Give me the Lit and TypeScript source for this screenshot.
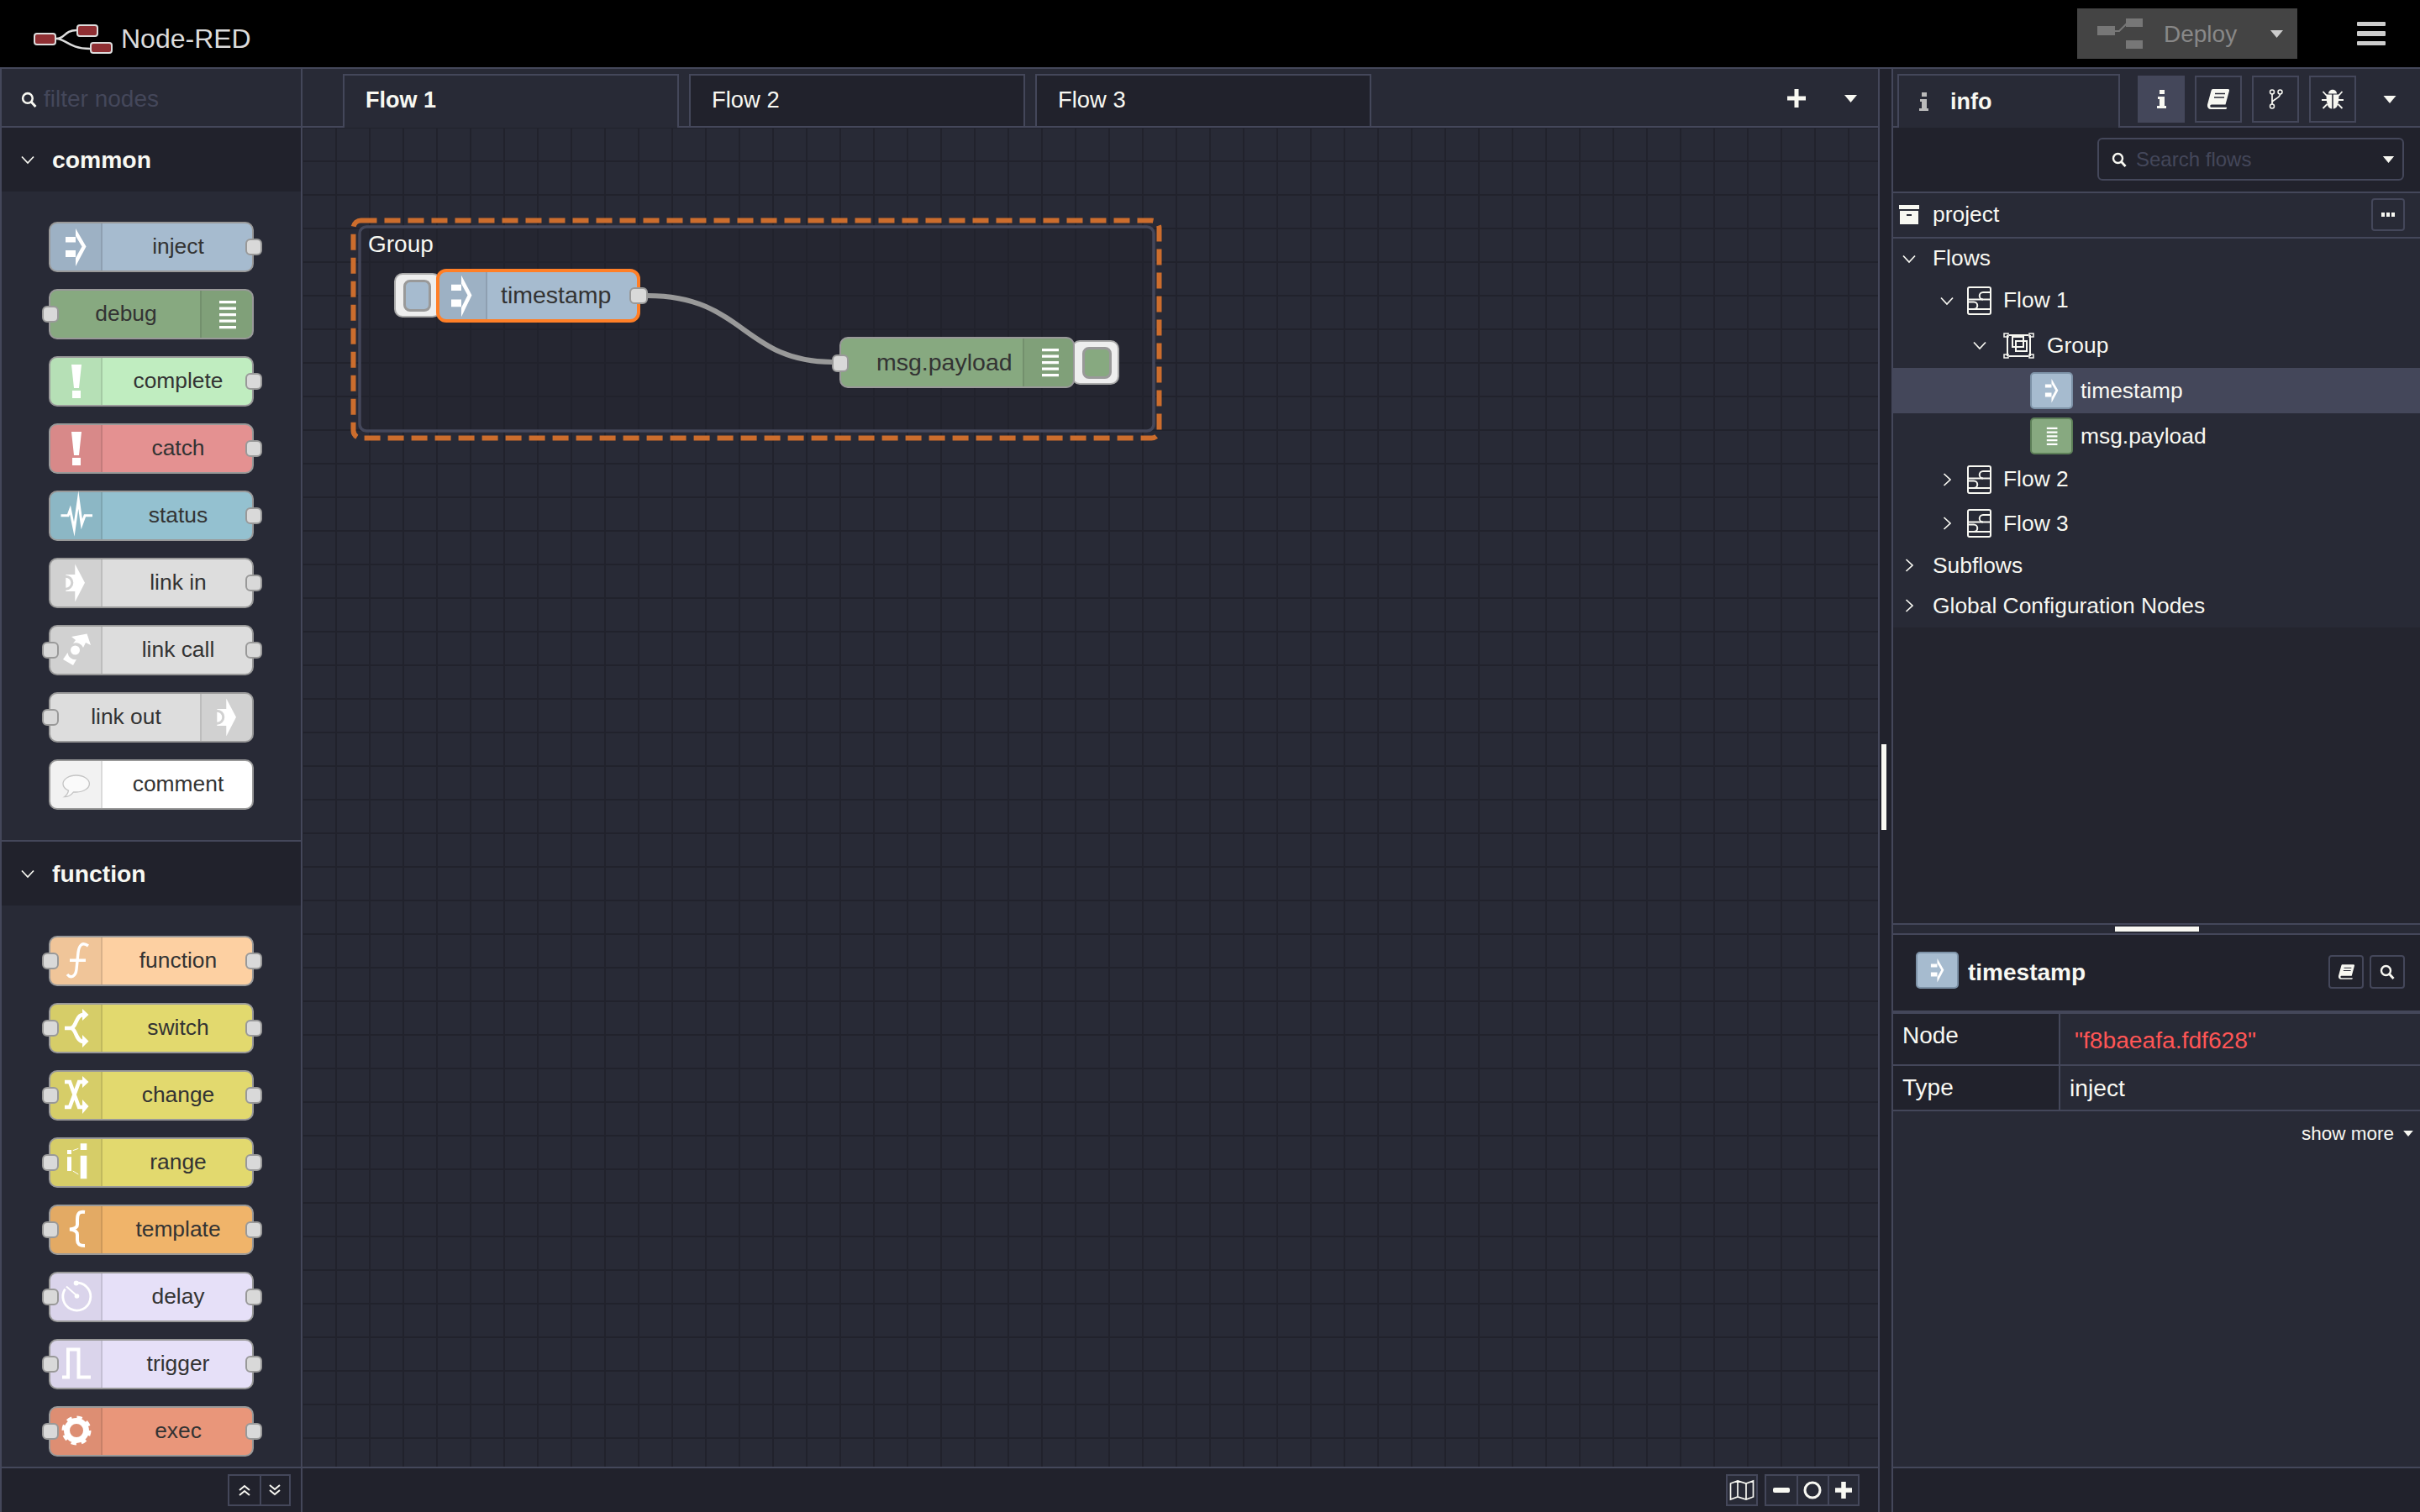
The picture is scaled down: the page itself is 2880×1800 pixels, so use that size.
import { LitElement, html, css, svg, nothing } from "lit";
import { customElement } from "lit/decorators.js";

// node icons are drawn in the coordinates of the 64x60 icon cell
const linkShape = svg`<path fill-rule="evenodd" d="M20.3 20H31.3V7.5L43 29.7 31.3 52.5V40H20.3V38.7A9 9 0 0 0 20.3 20.7ZM20.3 23.7A6 6 0 0 1 20.3 35.7Z" fill="#fff" />`;

const bang = svg`<path d="M27 10h12l-3 28h-6zM28 41h10v9H28z" fill="#fff" />`;

const ICONS = {
	inject: svg`<path d="M20 18h12v6.5H20zM20 34h12v8H20zM32 8 44.5 29.5 32 53V43l7.5-13.5L32 17z" fill="#fff" />`,
	debug: svg`<path d="M23 14h20v3.2H23zM23 21.5h20v3.2H23zM23 29h20v3.2H23zM23 36.5h20v3.2H23zM23 44h20v3.2H23z" fill="#fff" />`,
	complete: bang,
	catch: bang,
	status: svg`<polyline points="14.5,29.7 23,29.7 25.5,23 30.3,46 35.3,11 39.3,40 43,29.7 52,29.7" fill="none" stroke="#fff" stroke-width="3" stroke-miterlimit="12" />`,
	link: linkShape,
	linkcall: svg`<path d="M27 14 45.5 10.5 50 24 44 21 41 27A9 9 0 0 0 29 22L32 18ZM17 41 29 48 33 41A9 9 0 0 1 22.5 33Z" fill="#fff" /><circle cx="31.5" cy="30" r="5.5" fill="#fff" />`,
	comment: svg`<path d="M32.7 19C24 19 17 23.5 17 29c0 3.5 2.5 6.3 6.5 8.2C23 40 21 43 18.500 44.7c4 0 8.500-2.500 11-5.800 1 .1 2.100.1 3.200.1 8.700 0 15.700-4.500 15.700-10S41.400 19 32.700 19Z" fill="#fafafa" stroke="#c4c4c4" stroke-width="1.3" />`,
	func: svg`<path d="M47 12C40 7 36 11 35 20L33 40C32 49 26 51 22 46M25 29.3H44" fill="none" stroke="#fff" stroke-width="3.4" />`,
	switch: svg`<path d="M19 30H26C33 30 32 14 41 14M26 30C33 30 32 46 41 46" fill="none" stroke="#fff" stroke-width="4.5" /><path d="M40 7 47.5 14 40 21ZM40 38 47.5 45.5 40 53Z" fill="#fff" />`,
	change: svg`<path d="M19 14H25L36 44H41M19 44H25L36 14H41" fill="none" stroke="#fff" stroke-width="4.5" /><path d="M40 7 47.5 14 40 21ZM40 35 47.5 43 40 52Z" fill="#fff" />`,
	range: svg`<path d="M22 15h5v5h-5zM22 23.3h5V40h-5zM37.7 7.3h7.6V15h-7.6zM37.7 21.7h7.6v27.6h-7.6z" fill="#fff" /><path d="M28.7 15.7 35.3 13.3M28.7 40 35.3 44" stroke="#fff" stroke-width="1" />`,
	template: svg`<path d="M43 9C35 8 34 12 34 18V24C34 27 30 29 25 29.5 30 30 34 32 34 36V42C34 47 36 49 43 49" fill="none" stroke="#fff" stroke-width="4" />`,
	delay: svg`<path d="M35 13.1A16.5 16.5 0 1 1 19.5 20.5" fill="none" stroke="#fff" stroke-width="2.8" /><circle cx="32.7" cy="13.5" r="3" fill="#fff" /><circle cx="33.5" cy="29" r="2.8" fill="#fff" /><path d="M21 17.5 34 29" stroke="#fff" stroke-width="2" />`,
	trigger: svg`<path d="M16 45.5H23V12.5H35.5V45.5H50" fill="none" stroke="#fff" stroke-width="4" />`,
	exec: svg`<circle cx="33" cy="29" r="11.5" fill="none" stroke="#fff" stroke-width="7" /><circle cx="33" cy="29" r="15" fill="none" stroke="#fff" stroke-width="5" stroke-dasharray="6 5.78" />`,
};

type IconName = keyof typeof ICONS;

interface PaletteNode {
	label: string;
	color: string;
	icon: IconName;
	input?: boolean;
	output?: boolean;
	right?: boolean;
}

const COMMON: PaletteNode[] = [
	{ label: "inject", color: "#a6bbcf", icon: "inject", output: true },
	{ label: "debug", color: "#87a980", icon: "debug", input: true, right: true },
	{ label: "complete", color: "#c0edc0", icon: "complete", output: true },
	{ label: "catch", color: "#e49191", icon: "catch", output: true },
	{ label: "status", color: "#94c1d0", icon: "status", output: true },
	{ label: "link in", color: "#dddddd", icon: "link", output: true },
	{ label: "link call", color: "#dddddd", icon: "linkcall", input: true, output: true },
	{ label: "link out", color: "#dddddd", icon: "link", input: true, right: true },
	{ label: "comment", color: "#ffffff", icon: "comment" },
];

const FUNCTION: PaletteNode[] = [
	{ label: "function", color: "#fdd0a2", icon: "func", input: true, output: true },
	{ label: "switch", color: "#e2d96e", icon: "switch", input: true, output: true },
	{ label: "change", color: "#e2d96e", icon: "change", input: true, output: true },
	{ label: "range", color: "#e2d96e", icon: "range", input: true, output: true },
	{ label: "template", color: "#f0b46a", icon: "template", input: true, output: true },
	{ label: "delay", color: "#e6e0f8", icon: "delay", input: true, output: true },
	{ label: "trigger", color: "#e6e0f8", icon: "trigger", input: true, output: true },
	{ label: "exec", color: "#e9967a", icon: "exec", input: true, output: true },
];

const cellIcon = (name: IconName) =>
	html`<svg class="cell-icon" viewBox="0 0 64 60" preserveAspectRatio="none">${ICONS[name]}</svg>`;

const caret = (w: number, h: number) =>
	html`<svg class="caret" width=${w} height=${h} viewBox="0 0 10 6"><path d="M0 0H10L5 6Z" /></svg>`;

const searchIcon = (size: number) =>
	html`<svg class="line-icon" width=${size} height=${size} viewBox="0 0 18 18">
		<circle cx="7.5" cy="7.5" r="5.5" stroke-width="2.4" />
		<path d="M11.5 11.5 16.5 17" stroke-width="2.8" />
	</svg>`;

const chevron = (open: boolean) =>
	html`<svg class="chev ${open ? "" : "shut"}" width="16" height="16" viewBox="0 0 16 16">
		<path d="M1 4.5 8 12 15 4.5" />
	</svg>`;

const bookIcon = (w: number, h: number) =>
	html`<svg width=${w} height=${h} viewBox="0 0 26 24">
		<path d="M6.5 0H24.5C25.8 0 26.3 1 26 2L21.5 18.5H5C2.7 18.5 2.7 21.8 5 21.8H22.5C23 21.8 23.3 22.3 23 23 22.7 23.6 22.2 24 21.5 24H4C.5 24-.8 20.5.3 17.5L4.5 2C4.9.7 5.5 0 6.5 0Z" fill="#f8f8f2" />
		<path d="M9 5.5H21M8 10H20" stroke="#282a36" stroke-width="1.5" />
	</svg>`;

const flowIcon = html`<svg class="line-icon" width="29" height="34" viewBox="0 0 29 34">
	<rect x="1" y="1" width="27" height="32" rx="2" stroke-width="2" />
	<path d="M1 15.5H28M1 27H28" stroke-width="2" />
	<path d="M28 7H19A4 4 0 0 0 19 15.5M1 18.5H8A4 4 0 0 1 8 27" stroke-width="2" />
</svg>`;

const groupIcon = html`<svg class="line-icon" width="37" height="31" viewBox="0 0 37 31">
	<path d="M5 3V28M32 3V28M7 3H30M7 28H30" stroke-width="2" />
	<rect x="1" y="1" width="5" height="4" stroke-width="1.5" />
	<rect x="31" y="1" width="5" height="4" stroke-width="1.5" />
	<rect x="1" y="26" width="5" height="4" stroke-width="1.5" />
	<rect x="31" y="26" width="5" height="4" stroke-width="1.5" />
	<rect x="11" y="5" width="13" height="12" stroke-width="2" />
	<rect x="15" y="10" width="13" height="12" stroke-width="2" />
</svg>`;

const miniNode = (name: IconName, color: string, edge: string) =>
	html`<span class="mini" style="background:${color};border-color:${edge}">
		<svg width="41" height="38" viewBox="0 0 64 60">${ICONS[name]}</svg>
	</span>`;

interface TreeRow {
	label: string;
	height: number;
	indent: number;
	open?: boolean;
	icon?: unknown;
	iconGap?: number;
	labelGap: number;
	selected?: boolean;
}

const TREE: TreeRow[] = [
	{ label: "Flows", height: 47, indent: 11, open: true, labelGap: 20 },
	{ label: "Flow 1", height: 53, indent: 56, open: true, icon: flowIcon, iconGap: 16, labelGap: 14 },
	{ label: "Group", height: 54, indent: 95, open: true, icon: groupIcon, iconGap: 20, labelGap: 15 },
	{ label: "timestamp", height: 54, indent: 163, icon: miniNode("inject", "#a6bbcf", "#7d92a7"), labelGap: 9, selected: true },
	{ label: "msg.payload", height: 54, indent: 163, icon: miniNode("debug", "#87a980", "#5d7f58"), labelGap: 9 },
	{ label: "Flow 2", height: 49, indent: 56, open: false, icon: flowIcon, iconGap: 16, labelGap: 14 },
	{ label: "Flow 3", height: 56, indent: 56, open: false, icon: flowIcon, iconGap: 16, labelGap: 14 },
	{ label: "Subflows", height: 44, indent: 11, open: false, labelGap: 20 },
	{ label: "Global Configuration Nodes", height: 52, indent: 11, open: false, labelGap: 20 },
];

// the canvas starts here in page coordinates; diagram items below use page coordinates
const ORIGIN_X = 360;
const ORIGIN_Y = 152;

const place = (x: number, y: number, w: number, h: number) =>
	`left:${x - ORIGIN_X}px;top:${y - ORIGIN_Y}px;width:${w}px;height:${h}px`;

@customElement("app-root")
export class AppRoot extends LitElement {
	static styles = css`
		:host {
			display: block;
			width: 2880px;
			height: 1800px;
			overflow: hidden;
			background: #000;
			color: #f8f8f2;
			font-family: "Liberation Sans", Arial, sans-serif;
			font-size: 26.4px;
			--bg: #282a36;
			--bg2: #21222c;
			--line: #44475a;
		}

		* {
			box-sizing: border-box;
		}

		.caret path {
			fill: #f8f8f2;
		}

		.line-icon {
			flex-shrink: 0;
			fill: none;
			stroke: #f8f8f2;
		}

		.chev {
			flex-shrink: 0;
			fill: none;
			stroke: #f8f8f2;
			stroke-width: 1.7;
		}

		.chev.shut {
			transform: rotate(-90deg);
		}

		/* top bar */
		.topbar {
			display: flex;
			align-items: center;
			height: 80px;
			padding: 0 41px 0 40px;
		}

		.brand {
			display: flex;
			align-items: center;
			gap: 10px;
			padding-top: 12px;
			font-size: 32px;
			color: #dcdcdc;
		}

		.deploy {
			display: flex;
			align-items: center;
			width: 262px;
			height: 60px;
			margin-left: auto;
			padding-left: 24px;
			background: #444;
			color: #888;
			font-size: 28px;
		}

		.deploy span {
			margin-left: 25px;
			padding-top: 2px;
		}

		.deploy .caret {
			margin-left: 39px;
		}

		.deploy .caret path {
			fill: #ccc;
		}

		.burger {
			display: flex;
			flex-direction: column;
			gap: 6px;
			margin-left: 71px;
		}

		.burger i {
			display: block;
			width: 34px;
			height: 5.5px;
			border-radius: 1px;
			background: #ccc;
		}

		.main {
			display: flex;
			height: 1720px;
			border-top: 2px solid var(--line);
			background: var(--bg);
		}

		/* palette */
		.palette {
			display: flex;
			flex-direction: column;
			flex-shrink: 0;
			width: 360px;
			border-left: 2px solid var(--line);
			border-right: 2px solid var(--line);
		}

		.filter {
			display: flex;
			align-items: center;
			gap: 8px;
			flex-shrink: 0;
			height: 70px;
			padding: 4px 0 0 23px;
			border-bottom: 2px solid var(--line);
			color: var(--line);
			font-size: 28px;
		}

		.cat-head {
			display: flex;
			align-items: center;
			gap: 21px;
			flex-shrink: 0;
			height: 76px;
			padding-left: 23px;
			background: var(--bg2);
			font-size: 28.3px;
			font-weight: bold;
		}

		.cat-body {
			display: flex;
			flex-direction: column;
			gap: 20px;
			padding: 36px 0 36px 56px;
		}

		.cat-body.last {
			flex: 1;
			padding-bottom: 0;
		}

		.cat-rule {
			flex-shrink: 0;
			height: 2px;
			background: var(--line);
		}

		/* nodes */
		.node {
			position: relative;
			display: flex;
			flex-shrink: 0;
			width: 244px;
			height: 60px;
			border: 2px solid #999;
			border-radius: 10px;
			color: #333;
		}

		.node.right {
			flex-direction: row-reverse;
		}

		.cell {
			display: flex;
			flex-shrink: 0;
			width: 62px;
			border-right: 2px solid rgba(0, 0, 0, 0.1);
			border-radius: 8px 0 0 8px;
			background: rgba(0, 0, 0, 0.05);
		}

		.node.right .cell {
			border-right: 0;
			border-left: 2px solid rgba(0, 0, 0, 0.1);
			border-radius: 0 8px 8px 0;
		}

		.cell-icon {
			flex-shrink: 0;
			width: 64px;
			height: 60px;
			margin: -2px;
		}

		.label {
			display: flex;
			align-items: center;
			justify-content: center;
			flex: 1;
			padding: 0 0 2px 2px;
			white-space: nowrap;
		}

		.port {
			position: absolute;
			top: 50%;
			width: 20px;
			height: 20px;
			margin-top: -10px;
			border: 2px solid #999;
			border-radius: 6px;
			background: #d9d9d9;
		}

		.port.in {
			left: -10px;
		}

		.port.out {
			right: -12px;
		}

		/* workspace */
		.workspace {
			display: flex;
			flex-direction: column;
			flex-shrink: 0;
			width: 1877px;
			border-right: 2px solid var(--line);
		}

		.tabbar {
			display: flex;
			align-items: flex-start;
			flex-shrink: 0;
			height: 70px;
			padding: 6px 0 0 48px;
			border-bottom: 2px solid var(--line);
		}

		.tab {
			display: flex;
			align-items: center;
			width: 400px;
			height: 62px;
			margin-right: 12px;
			padding: 0 0 2px 25px;
			border: 2px solid var(--line);
			border-bottom: 0;
			background: var(--bg2);
			font-size: 27.4px;
		}

		.tab.active {
			height: 64px;
			padding-bottom: 4px;
			background: var(--bg);
			font-size: 27px;
			font-weight: bold;
		}

		.tab-tools {
			display: flex;
			align-items: center;
			gap: 45px;
			height: 58px;
			margin-left: auto;
			margin-right: 24px;
		}

		.canvas {
			position: relative;
			flex: 1;
			overflow: hidden;
			background-color: var(--bg);
			background-image: linear-gradient(to right, var(--bg2) 2px, transparent 2px),
				linear-gradient(to bottom, var(--bg2) 2px, transparent 2px);
			background-size: 40px 40px;
			background-position: 39px 39px;
		}

		.canvas svg.overlay {
			position: absolute;
			inset: 0;
			width: 100%;
			height: 100%;
		}

		.canvas .group-label {
			font-size: 28px;
			fill: #f8f8f2;
		}

		.canvas .node {
			position: absolute;
			font-size: 28.5px;
		}

		.canvas .label {
			justify-content: flex-start;
			padding-bottom: 0;
		}

		.canvas .selected .label {
			padding-bottom: 2px;
		}

		.canvas .cell {
			width: 57px;
		}

		.canvas .cell-icon {
			height: 66px;
			margin: -5px 0 0 -6px;
		}

		.canvas .right .cell {
			width: 60px;
		}

		.canvas .right .cell-icon {
			height: 60px;
			margin: -2px;
		}

		.canvas .selected {
			border: 4px solid #ff7f27;
			border-radius: 12px;
		}

		.canvas .selected .port.out {
			right: -13px;
			width: 22px;
		}

		.canvas .port.in {
			left: -11px;
			height: 21px;
		}

		.inject-tab {
			position: absolute;
			display: flex;
			align-items: center;
			border: 2px solid #aaa;
			border-radius: 10px;
			background: #eee;
		}

		.inject-tab i {
			display: block;
			height: 38px;
			border: 3px solid #999;
			border-radius: 8px;
		}

		.bar-bottom {
			display: flex;
			justify-content: flex-end;
			gap: 8px;
			flex-shrink: 0;
			height: 54px;
			padding: 7px 0 0;
			border-top: 2px solid var(--line);
			background: var(--bg2);
		}

		.workspace .bar-bottom {
			padding-right: 22px;
		}

		.btns {
			display: flex;
			height: 38px;
			border: 2px solid var(--line);
			background: var(--bg);
		}

		.btns > span {
			display: flex;
			align-items: center;
			justify-content: center;
			width: 36.4px;
		}

		.btns > span + span {
			border-left: 2px solid var(--line);
		}

		.btns.single > span {
			width: 34px;
		}

		.palette .bar-bottom {
			padding-right: 12px;
		}

		.palette .btns {
			background: none;
		}

		.palette .btns > span {
			width: 35.5px;
		}

		.gutter {
			display: flex;
			align-items: center;
			justify-content: center;
			flex-shrink: 0;
			width: 14px;
			background: var(--bg2);
		}

		.gutter i {
			display: block;
			width: 6px;
			height: 102px;
			margin-right: 4px;
			margin-bottom: 8px;
			background: #f8f8f2;
		}

		/* sidebar */
		.sidebar {
			display: flex;
			flex-direction: column;
			flex: 1;
			min-width: 0;
			border-left: 2px solid var(--line);
		}

		.side-tabs {
			display: flex;
			align-items: flex-start;
			flex-shrink: 0;
			height: 70px;
			padding: 6px 0 0 5px;
			border-bottom: 2px solid var(--line);
		}

		.side-tab {
			display: flex;
			align-items: center;
			gap: 26px;
			width: 265px;
			height: 64px;
			padding-left: 24px;
			border: 2px solid var(--line);
			border-bottom: 0;
			background: var(--bg);
			font-size: 27px;
			font-weight: bold;
		}

		.side-btns {
			display: flex;
			gap: 12px;
			margin: 2px 0 0 21px;
		}

		.side-btn {
			display: flex;
			align-items: center;
			justify-content: center;
			width: 56px;
			height: 56px;
			border: 2px solid var(--line);
		}

		.side-btn.on {
			background: var(--line);
		}

		.side-tabs .caret {
			margin: 26px 0 0 32px;
		}

		.search-row {
			display: flex;
			align-items: center;
			justify-content: flex-end;
			flex-shrink: 0;
			height: 78px;
			padding: 0 19px 2px 0;
			border-bottom: 2px solid var(--line);
			background: var(--bg2);
		}

		.search {
			display: flex;
			align-items: center;
			gap: 11px;
			width: 365px;
			height: 51px;
			padding: 1px 9px 0 15px;
			border: 2px solid var(--line);
			border-radius: 6px;
			color: var(--line);
			font-size: 24px;
		}

		.search .caret {
			margin-left: auto;
		}

		.project {
			display: flex;
			align-items: center;
			gap: 16px;
			flex-shrink: 0;
			height: 54px;
			padding: 0 18px 2px 7px;
			border-bottom: 2px solid var(--line);
		}

		.tiny-btn {
			display: flex;
			align-items: center;
			justify-content: center;
			gap: 2px;
			width: 40px;
			height: 39px;
			margin-left: auto;
			border: 2px solid var(--line);
			border-radius: 4px;
		}

		.tiny-btn i {
			display: block;
			width: 4px;
			height: 5px;
			background: #f8f8f2;
		}

		.tree {
			flex-shrink: 0;
		}

		.tree-row {
			display: flex;
			align-items: center;
		}

		.tree-row.selected {
			background: var(--line);
		}

		.tree-fill {
			flex-shrink: 0;
			height: 352px;
			background: #24252f;
		}

		.mini {
			display: flex;
			align-items: center;
			justify-content: center;
			flex-shrink: 0;
			width: 51px;
			height: 44px;
			border: 2px solid;
			border-radius: 5px;
		}

		.splitter {
			display: flex;
			justify-content: center;
			flex-shrink: 0;
			height: 14px;
			padding-top: 2px;
			border-top: 2px solid var(--line);
			border-bottom: 2px solid var(--line);
		}

		.splitter i {
			display: block;
			width: 100px;
			height: 6px;
			margin-left: 1px;
			background: #f8f8f2;
		}

		.info-head {
			display: flex;
			align-items: center;
			flex-shrink: 0;
			gap: 11px;
			height: 94px;
			padding: 0 18px 2px 27px;
			border-bottom: 4px solid var(--line);
			background: var(--bg2);
			font-size: 28px;
			font-weight: bold;
		}

		.info-head > span:not(.mini) {
			padding-top: 2px;
		}

		.info-head .mini {
			margin-bottom: 4px;
		}

		.info-head .tools {
			display: flex;
			gap: 7px;
			margin-left: auto;
		}

		.info-head .tools span {
			display: flex;
			align-items: center;
			justify-content: center;
			width: 42px;
			height: 40px;
			border: 2px solid var(--line);
			border-radius: 4px;
		}

		.info-table {
			display: grid;
			flex-shrink: 0;
			grid-template-columns: 199px 1fr;
			font-size: 28px;
		}

		.info-table > div {
			height: 62px;
			border-bottom: 2px solid var(--line);
		}

		.info-table > div.short {
			height: 54px;
		}

		.info-table .key {
			padding: 10px 0 0 11px;
			border-right: 2px solid var(--line);
			background: var(--bg2);
		}

		.info-table .key.short {
			padding-top: 10px;
		}

		.info-table .val {
			padding: 15px 0 0 17px;
			font-size: 28.2px;
		}

		.info-table .val.short {
			padding: 10px 0 0 11px;
		}

		.red {
			color: #ff5555;
		}

		.more {
			display: flex;
			align-items: flex-start;
			justify-content: flex-end;
			flex: 1;
			gap: 11px;
			padding: 14px 8px 0 0;
			font-size: 22.5px;
		}

		.more .caret {
			margin-top: 9px;
		}
	`;

	private renderNode(node: PaletteNode) {
		return html`<div class="node ${node.right ? "right" : ""}" style="background:${node.color}">
			<div class="cell">${cellIcon(node.icon)}</div>
			<div class="label">${node.label}</div>
			${node.input ? html`<span class="port in"></span>` : nothing}
			${node.output ? html`<span class="port out"></span>` : nothing}
		</div>`;
	}

	private renderPalette() {
		return html`<aside class="palette">
			<div class="filter">${searchIcon(19)}<span>filter nodes</span></div>
			<div class="cat-head">${chevron(true)}<span>common</span></div>
			<div class="cat-body">${COMMON.map((n) => this.renderNode(n))}</div>
			<div class="cat-rule"></div>
			<div class="cat-head">${chevron(true)}<span>function</span></div>
			<div class="cat-body last">${FUNCTION.map((n) => this.renderNode(n))}</div>
			<div class="bar-bottom">
				<div class="btns">
					<span><svg class="line-icon" width="14" height="14" viewBox="0 0 14 14"><path d="M1 7 7 2 13 7M1 13 7 8 13 13" stroke-width="2" /></svg></span>
					<span><svg class="line-icon" width="14" height="14" viewBox="0 0 14 14"><path d="M1 1 7 6 13 1M1 7 7 12 13 7" stroke-width="2" /></svg></span>
				</div>
			</div>
		</aside>`;
	}

	private renderCanvas() {
		return html`<div class="canvas">
			<svg class="overlay" viewBox="360 152 1875 1594">
				<rect x="428" y="270" width="945" height="243" rx="8" fill="#21222c" fill-opacity="0.5" stroke="#44475a" stroke-width="3.5" />
				<rect x="420.5" y="262.5" width="959" height="259" rx="9" fill="none" stroke="#cc6d2d" stroke-width="6" stroke-dasharray="19 9" />
				<text class="group-label" x="438" y="300">Group</text>
				<path d="M771 352C885 352 885 431 990 431" fill="none" stroke="#999" stroke-width="6" />
			</svg>

			<div class="inject-tab" style="${place(469, 325, 56, 53)};padding-left:9px">
				<i style="width:33px;background:#a6bbcf"></i>
			</div>
			<div class="node selected" style="${place(519, 320, 243, 64)};background:#a6bbcf">
				<div class="cell">${cellIcon("inject")}</div>
				<div class="label" style="padding-left:16px">timestamp</div>
				<span class="port out"></span>
			</div>

			<div class="inject-tab" style="${place(1275, 405, 57, 53)};justify-content:flex-end;padding-right:7px">
				<i style="width:35px;background:#87a980"></i>
			</div>
			<div class="node right" style="${place(999, 401, 280, 61)};background:#87a980">
				<div class="cell">${cellIcon("debug")}</div>
				<div class="label" style="padding-left:42px">msg.payload</div>
				<span class="port in"></span>
			</div>
		</div>`;
	}

	private renderWorkspace() {
		return html`<section class="workspace">
			<div class="tabbar">
				<div class="tab active">Flow 1</div>
				<div class="tab">Flow 2</div>
				<div class="tab">Flow 3</div>
				<div class="tab-tools">
					<svg width="22" height="22" viewBox="0 0 22 22"><path d="M11 0V22M0 11H22" stroke="#f8f8f2" stroke-width="5" /></svg>
					${caret(17, 9)}
				</div>
			</div>
			${this.renderCanvas()}
			<div class="bar-bottom">
				<div class="btns single">
					<span>
						<svg class="line-icon" width="30" height="26" viewBox="0 0 30 26">
							<path d="M1.5 5 10 2 20 5 28.5 2V21L20 24 10 21 1.5 24ZM10 2V21M20 5V24" stroke-width="1.7" />
						</svg>
					</span>
				</div>
				<div class="btns">
					<span><svg width="20" height="6" viewBox="0 0 20 6"><rect width="20" height="6" rx="2" fill="#f8f8f2" /></svg></span>
					<span><svg class="line-icon" width="22" height="22" viewBox="0 0 22 22"><circle cx="11" cy="11" r="9" stroke-width="3" /></svg></span>
					<span><svg width="20" height="20" viewBox="0 0 20 20"><path d="M10 0V20M0 10H20" stroke="#f8f8f2" stroke-width="5.5" /></svg></span>
				</div>
			</div>
		</section>`;
	}

	private renderTreeRow(row: TreeRow) {
		return html`<div class="tree-row ${row.selected ? "selected" : ""}" style="height:${row.height}px;padding-left:${row.indent}px">
			${row.open === undefined ? nothing : chevron(row.open)}
			${row.icon ? html`<span style="display:flex;margin-left:${row.iconGap ?? 0}px">${row.icon}</span>` : nothing}
			<span style="margin-left:${row.labelGap}px">${row.label}</span>
		</div>`;
	}

	private renderSidebar() {
		return html`<aside class="sidebar">
			<div class="side-tabs">
				<div class="side-tab">
					<svg width="11" height="22" viewBox="0 0 11 22"><path d="M3 0h6v5H3zM1 8h8v11h2v3H0v-3h3v-8H1z" fill="#bbb" /></svg>
					<span>info</span>
				</div>
				<div class="side-btns">
					<div class="side-btn on">
						<svg width="11" height="22" viewBox="0 0 11 22"><path d="M3 0h6v5H3zM1 8h8v11h2v3H0v-3h3v-8H1z" fill="#f8f8f2" /></svg>
					</div>
					<div class="side-btn">${bookIcon(26, 24)}</div>
					<div class="side-btn">
						<svg class="line-icon" width="17" height="24" viewBox="0 0 17 24">
							<circle cx="4" cy="3.5" r="2.5" stroke-width="1.5" />
							<circle cx="13.5" cy="3.5" r="2.5" stroke-width="1.5" />
							<circle cx="4" cy="20.5" r="2.5" stroke-width="1.5" />
							<path d="M4 6V18M13.5 6C13.5 11 5 12 4 16" stroke-width="1.7" />
						</svg>
					</div>
					<div class="side-btn">
						<svg width="26" height="24" viewBox="0 0 26 24">
							<path d="M8 5.5C8 -1 18 -1 18 5.5Z" fill="#f8f8f2" />
							<path d="M5.5 6.5H12.2V23.5C8 23.5 5.5 19 5.5 6.5ZM13.8 6.5H20.5C20.5 19 18 23.5 13.8 23.5Z" fill="#f8f8f2" />
							<path d="M1.5 3 6 8M24.5 3 20 8M0 13H6M26 13H20M1.5 23 6.5 18M24.5 23 19.5 18" stroke="#f8f8f2" stroke-width="1.8" fill="none" />
						</svg>
					</div>
				</div>
				${caret(16, 9)}
			</div>

			<div class="search-row">
				<div class="search">
					${searchIcon(18)}<span>Search flows</span>
					${caret(15, 8)}
				</div>
			</div>

			<div class="project">
				<svg width="24" height="23" viewBox="0 0 24 23">
					<path fill-rule="evenodd" d="M0 0H24V5H0ZM1 7H23V23H1ZM9 11V13H15V11Z" fill="#f8f8f2" />
				</svg>
				<span>project</span>
				<div class="tiny-btn"><i></i><i></i><i></i></div>
			</div>

			<div class="tree">${TREE.map((r) => this.renderTreeRow(r))}</div>
			<div class="tree-fill"></div>

			<div class="splitter"><i></i></div>

			<div class="info-head">
				${miniNode("inject", "#a6bbcf", "#7d92a7")}
				<span>timestamp</span>
				<div class="tools">
					<span>${bookIcon(19, 18)}</span>
					<span>${searchIcon(18)}</span>
				</div>
			</div>

			<div class="info-table">
				<div class="key">Node</div>
				<div class="val red">"f8baeafa.fdf628"</div>
				<div class="key short">Type</div>
				<div class="val short">inject</div>
			</div>

			<div class="more"><span>show more</span>${caret(12, 7)}</div>
			<div class="bar-bottom"></div>
		</aside>`;
	}

	render() {
		return html`
			<header class="topbar">
				<div class="brand">
					<svg width="94" height="35" viewBox="0 0 94 35">
						<path d="M27 17C38 17 36 7 51 7M27 17C38 17 42 29 67 29" fill="none" stroke="#ddd" stroke-width="2.5" />
						<rect x="1" y="11" width="25" height="13" rx="3" fill="#8f2f33" stroke="#ddd" stroke-width="2" />
						<rect x="52" y="1" width="24" height="13" rx="3" fill="#8f2f33" stroke="#ddd" stroke-width="2" />
						<rect x="68" y="22" width="25" height="12" rx="3" fill="#8f2f33" stroke="#ddd" stroke-width="2" />
					</svg>
					<span>Node-RED</span>
				</div>
				<div class="deploy">
					<svg width="54" height="36" viewBox="0 0 54 36">
						<path d="M21 15 26 15 35 6" fill="none" stroke="#777" stroke-width="2" />
						<rect y="9" width="21" height="11" fill="#777" />
						<rect x="34" width="20" height="10" fill="#777" />
						<rect x="34" y="26" width="20" height="10" fill="#777" />
					</svg>
					<span>Deploy</span>
					${caret(17, 9)}
				</div>
				<div class="burger"><i></i><i></i><i></i></div>
			</header>
			<div class="main">
				${this.renderPalette()} ${this.renderWorkspace()}
				<div class="gutter"><i></i></div>
				${this.renderSidebar()}
			</div>
		`;
	}
}
